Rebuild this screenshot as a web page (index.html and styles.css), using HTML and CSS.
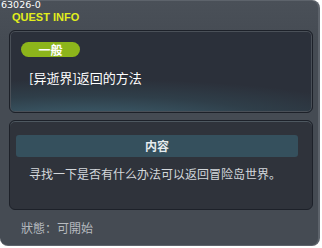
FILE: index.html
```html
<!DOCTYPE html>
<html lang="zh">
  <head>
    <meta charset="UTF-8" />
    <title>Quest Info</title>
    <link rel="stylesheet" href="styles.css">
  </head>
  <body>
    <div class="window">
      <div class="title">
        <div class="quest-id">63026-0</div>
        <div class="quest-label">QUEST INFO</div>
      </div>

      <section class="panel summary">
        <div class="badge">一般</div>
        <div class="quest-name">[异逝界]返回的方法</div>
      </section>

      <section class="panel details">
        <div class="details-head">内容</div>
        <div class="details-text">寻找一下是否有什么办法可以返回冒险岛世界。</div>
      </section>

      <div class="status">狀態：可開始</div>
    </div>
  </body>
</html>
```

FILE: styles.css
```css
body {
  margin: 0;
  background: #ffffff;
  font-family: "Noto Sans CJK SC", "DejaVu Sans", sans-serif;
}

.window {
  width: 320px;
  height: 246px;
  box-sizing: border-box;
  padding: 0 7px 0 9px;
  background: linear-gradient(#4a5058, #454b53 40px, #454b53);
  border-top: 1px solid #5d636b;
  border-right: 2px solid #5d636b;
  border-bottom: 1px solid #5d636b;
  border-radius: 0 8px 8px 8px;
  overflow: hidden;
}

.title {
  height: 29px;
  position: relative;
}

.quest-id {
  position: absolute;
  left: -8px;
  top: -1px;
  font-family: "DejaVu Sans", sans-serif;
  font-size: 9.5px;
  line-height: 10px;
  color: #ffffff;
}

.quest-label {
  position: absolute;
  left: 3px;
  top: 10px;
  font-family: "Liberation Sans", sans-serif;
  font-weight: bold;
  font-size: 11px;
  line-height: 12px;
  color: #e2ee1c;
}

.panel {
  box-sizing: border-box;
  width: 304px;
  border: 1px solid #1d2129;
  border-radius: 6px;
}

.summary {
  height: 83px;
  padding: 11px 0 0 11px;
  background:
    radial-gradient(ellipse 130% 70% at 25% 115%, #406676 0%, rgba(52, 80, 92, 0.45) 50%, rgba(43, 48, 58, 0) 80%),
    #2b303a;
  box-shadow: inset 0 0 0 1px #4a5058;
}

.badge {
  width: 59px;
  height: 15px;
  border-radius: 8px;
  background: #8db51b;
  color: #ffffff;
  font-weight: bold;
  font-size: 12px;
  line-height: 15px;
  text-align: center;
}

.quest-name {
  margin: 13px 0 0 8px;
  font-size: 13px;
  line-height: 15px;
  color: #ffffff;
}

.details {
  height: 90px;
  margin-top: 7px;
  padding: 14px 0 0 6px;
  background: #2f333b;
  box-shadow: inset 0 1px 0 #4e5860;
}

.details-head {
  width: 282px;
  height: 22px;
  border-radius: 3px;
  background: #35505d;
  color: #e6ecef;
  font-weight: bold;
  font-size: 12px;
  line-height: 22px;
  text-align: center;
}

.details-text {
  margin: 9px 0 0 13px;
  font-size: 12px;
  line-height: 16px;
  color: #d3d7db;
}

.status {
  margin: 10px 0 0 12px;
  font-size: 12px;
  line-height: 16px;
  color: #b6babf;
}
```
